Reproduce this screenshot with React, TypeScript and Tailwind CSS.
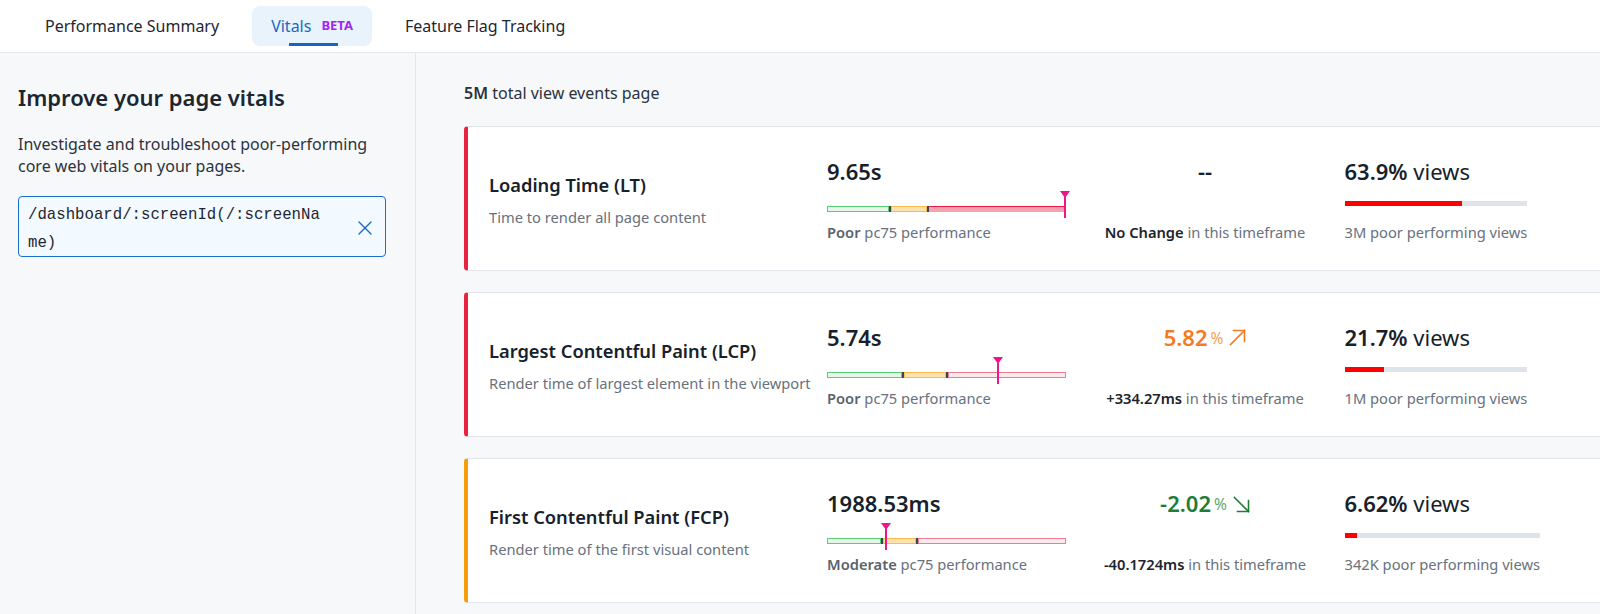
import React from "react";

type Seg = { g: number; o: number };
type Card = {
  accent: string;
  title: string;
  sub: string;
  value: string;
  seg: Seg;
  marker: number;
  strongRed: boolean;
  rating: string;
  change: "none" | "up" | "down";
  changeVal?: string;
  delta: string;
  views: string;
  pct: number;
  viewsSub: string;
};

const cards: Card[] = [
  {
    accent: "border-l-[#e8233f]",
    title: "Loading Time (LT)",
    sub: "Time to render all page content",
    value: "9.65s",
    seg: { g: 61.5, o: 38 },
    marker: 238.5,
    strongRed: true,
    rating: "Poor",
    change: "none",
    delta: "No Change",
    views: "63.9%",
    pct: 64,
    viewsSub: "3M poor performing views",
  },
  {
    accent: "border-l-[#e8233f]",
    title: "Largest Contentful Paint (LCP)",
    sub: "Render time of largest element in the viewport",
    value: "5.74s",
    seg: { g: 75, o: 44 },
    marker: 171,
    strongRed: false,
    rating: "Poor",
    change: "up",
    changeVal: "5.82",
    delta: "+334.27ms",
    views: "21.7%",
    pct: 21.7,
    viewsSub: "1M poor performing views",
  },
  {
    accent: "border-l-[#f59e0b]",
    title: "First Contentful Paint (FCP)",
    sub: "Render time of the first visual content",
    value: "1988.53ms",
    seg: { g: 53.5, o: 35.5 },
    marker: 59,
    strongRed: false,
    rating: "Moderate",
    change: "down",
    changeVal: "-2.02",
    delta: "-40.1724ms",
    views: "6.62%",
    pct: 6.5,
    viewsSub: "342K poor performing views",
  },
];

function ArrowUR() {
  return (
    <svg width="17" height="17" viewBox="0 0 17 17" fill="none" stroke="currentColor" strokeWidth="1.6" strokeLinecap="square">
      <path d="M1.5 15.5 15.5 1.5" />
      <path d="M4.5 1.5h11v11" />
    </svg>
  );
}
function ArrowDR() {
  return (
    <svg width="17" height="17" viewBox="0 0 17 17" fill="none" stroke="currentColor" strokeWidth="1.6" strokeLinecap="square">
      <path d="M1.5 1.5 15.5 15.5" />
      <path d="M15.5 4.5v11h-11" />
    </svg>
  );
}

function RangeBar({ seg, marker, strongRed }: { seg: Seg; marker: number; strongRed: boolean }) {
  return (
    <div className="relative h-[32px] w-[238.5px]">
      <div className="absolute left-0 right-0 top-[20px] flex h-[6px]">
        <div className="h-full border border-[#56cf74] bg-[#e6f7ea]" style={{ width: seg.g }} />
        <div className="h-full w-[2px] bg-[#3e4550]" />
        <div className="h-full border border-[#f9bb4c] bg-[#fde2b0]" style={{ width: seg.o - 2 }} />
        <div className="h-full w-[2px] bg-[#3e4550]" />
        {strongRed ? (
          <div className="h-full flex-1 border-t-[1.5px] border-[#e8173f] bg-[#f5a2b0]" />
        ) : (
          <div className="h-full flex-1 border border-[#f07a90] bg-[#fdeaee]" />
        )}
      </div>
      <div className="absolute top-[5px] flex flex-col items-center" style={{ left: marker - 5.5 }}>
        <div className="h-0 w-0 border-l-[5.5px] border-r-[5.5px] border-t-[7px] border-l-transparent border-r-transparent border-t-[#ee148c]" />
        <div className="-mt-[1px] h-[21px] w-[2px] bg-[#ee148c]" />
      </div>
    </div>
  );
}

function VitalCard({ c }: { c: Card }) {
  return (
    <div className={`flex h-[145px] w-[1160px] shrink-0 rounded-[4px] border border-[#e2e5ea] border-l-4 ${c.accent} bg-white`}>
      <div className="w-[359px] shrink-0 pl-[21px] pt-[46px]">
        <div className="text-[18.3px] font-semibold leading-[24px] text-[#17212b]">{c.title}</div>
        <div className="mt-[10px] whitespace-nowrap text-[14.7px] leading-[20px] text-[#68717d]">{c.sub}</div>
      </div>
      <div className="w-[238.5px] shrink-0 pt-[29px]">
        <div className="text-[22px] font-semibold leading-[30px] text-[#17212b]">{c.value}</div>
        <RangeBar seg={c.seg} marker={c.marker} strongRed={c.strongRed} />
        <div className="mt-[4px] whitespace-nowrap text-[14.7px] leading-[20px] text-[#68717d]">
          <span className="font-semibold text-[#5a636e]">{c.rating}</span> pc75 performance
        </div>
      </div>
      <div className="w-[279px] shrink-0 pt-[29px] text-center">
        {c.change === "none" && (
          <div className="text-[22px] font-semibold leading-[30px] text-[#17212b]">--</div>
        )}
        {c.change === "up" && (
          <div className="flex h-[30px] items-center justify-center text-[#f47b20]">
            <span className="text-[22px] font-semibold leading-[30px]">{c.changeVal}</span>
            <span className="ml-[3px] mt-[4px] text-[15.5px] text-[#f5a05a]">%</span>
            <span className="ml-[6px]">
              <ArrowUR />
            </span>
          </div>
        )}
        {c.change === "down" && (
          <div className="flex h-[30px] items-center justify-center text-[#1f7d36]">
            <span className="text-[22px] font-semibold leading-[30px]">{c.changeVal}</span>
            <span className="ml-[3px] mt-[4px] text-[15.5px] text-[#5ca56d]">%</span>
            <span className="ml-[6px] mt-[2px]">
              <ArrowDR />
            </span>
          </div>
        )}
        <div className="mt-[36px] whitespace-nowrap text-[14.7px] leading-[20px] text-[#68717d]">
          <span className="font-semibold text-[#1b232c]">{c.delta}</span> in this timeframe
        </div>
      </div>
      <div className="shrink-0 pt-[29px]">
        <div className="inline-block">
          <div className="text-[22px] leading-[30px] text-[#17212b]">
            <span className="font-semibold">{c.views}</span> views
          </div>
          <div className="mt-[15px] h-[5px] w-full bg-[#dfe3ea]">
            <div className="h-full bg-[#ff0000]" style={{ width: `${c.pct}%` }} />
          </div>
          <div className="mt-[16px] whitespace-nowrap text-[14.7px] leading-[20px] text-[#68717d]">{c.viewsSub}</div>
        </div>
      </div>
    </div>
  );
}

export default function App() {
  return (
    <div className="h-[614px] w-[1600px] overflow-hidden bg-[#f7f8fa] font-['Noto_Sans',sans-serif]">
      <header className="flex h-[53px] items-center gap-[13px] border-b border-[#e4e6ea] bg-white pl-[25px]">
        <div className="px-5 text-[16px] text-[#1f2630]">Performance Summary</div>
        <div className="relative flex h-[40px] items-center rounded-[8px] bg-[#e9f3fc] px-[19px]">
          <span className="text-[16px] text-[#1a69c4]">Vitals</span>
          <span className="ml-[10px] text-[13px] font-bold text-[#a226f2]">BETA</span>
          <div className="absolute bottom-0 left-[37px] h-[3px] w-[49px] bg-[#1565c8]" />
        </div>
        <div className="px-5 text-[16px] text-[#1f2630]">Feature Flag Tracking</div>
      </header>
      <div className="flex h-[561px]">
        <aside className="w-[416px] shrink-0 border-r border-[#e3e5e8] px-[18px] pt-[30px]">
          <h1 className="text-[22px] font-semibold leading-[28px] text-[#1b2631]">Improve your page vitals</h1>
          <p className="mt-[22px] text-[16px] leading-[22.4px] text-[#2b333d]">
            Investigate and troubleshoot poor-performing core web vitals on your pages.
          </p>
          <div className="mt-[18px] flex h-[61px] w-[368px] items-start rounded-[4px] border border-[#1a6fd0] bg-[#f2f9ff] pl-[9px] pt-[4px]">
            <div className="w-[298px] break-all font-['Liberation_Mono',monospace] text-[15.7px] leading-[28.5px] text-[#1f2630]">
              /dashboard/:screenId(/:screenName)
            </div>
            <div className="ml-auto mr-[11px] mt-[18px] text-[#1a69c4]">
              <svg width="18" height="18" viewBox="0 0 24 24" fill="none" stroke="currentColor" strokeWidth="1.8" strokeLinecap="round">
                <path d="M4 4 20 20" />
                <path d="M20 4 4 20" />
              </svg>
            </div>
          </div>
        </aside>
        <main className="flex-1 pl-[48px] pt-[29px]">
          <div className="text-[16px] leading-[22px] text-[#2a323c]">
            <span className="font-semibold">5M</span> total view events page
          </div>
          <div className="mt-[22px] flex flex-col gap-[21px]">
            {cards.map((c) => (
              <VitalCard key={c.title} c={c} />
            ))}
          </div>
        </main>
      </div>
    </div>
  );
}
